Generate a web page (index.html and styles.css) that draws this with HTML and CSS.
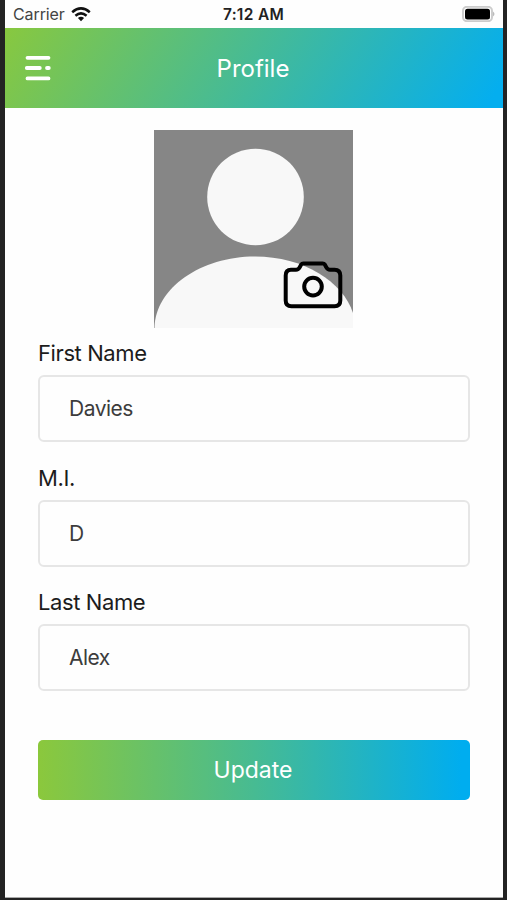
FILE: index.html
```html
<!DOCTYPE html>
<html lang="en">
<head>
<meta charset="utf-8">
<title>Profile</title>
<link rel="stylesheet" href="styles.css">
</head>
<body>
<div class="screen">
  <div class="status">
    <div class="carrier"><span>Carrier</span>
      <svg class="wifi" width="20" height="15" viewBox="0 0 20 15" fill="none" stroke="#111" stroke-width="2.5"><path d="M1.2 5.2Q10-2.4 18.8 5.2M4.4 8.7Q10 4.1 15.6 8.7"/><path d="M6.9 11Q10 8.7 13.1 11L10 14.2Z" fill="#111" stroke="none"/></svg>
    </div>
    <span class="time">7:12 AM</span>
    <svg class="battery" width="34" height="16" viewBox="0 0 34 16"><rect x="1" y=".8" width="29" height="14.4" rx="4" fill="#fff" stroke="#ccc" stroke-width="2"/><rect x="3" y="2.7" width="25" height="10.8" rx="2.5" fill="#000"/><path d="M31 5.5Q34 8 31 10.5Z" fill="#bbb"/></svg>
  </div>
  <header class="header">
    <svg class="menu" width="28" height="27" viewBox="0 0 28 27" stroke="#fff" stroke-width="3.8" stroke-linecap="round"><path d="M3.5 2.8H24.5M2.8 13H15.8M23 13H24.8M3.5 23.4H24.5"/></svg>
    <h1 class="title">Profile</h1>
  </header>
  <main class="content">
    <div class="avatar">
      <svg width="199" height="198" viewBox="0 0 199 198"><path d="M0 0H199V198H0Z" fill="#868686"/><circle cx="101.5" cy="67" r="48.3" fill="#f8f8f8"/><path d="M.5 198C1 158 47 126.5 101 126.5C150 126.5 189 152 199 183V198Z" fill="#f8f8f8"/></svg>
      <svg class="camera" width="60" height="48" viewBox="0 0 60 48" fill="none" stroke="#000" stroke-width="4" stroke-linejoin="round"><path d="M8 8.7H13Q15.4 8.7 16.6 6.4L18.2 3.6Q18.9 2.4 20.4 2.4H39.6Q41.1 2.4 41.8 3.6L43.4 6.4Q44.6 8.7 47 8.7H51.5Q57.3 8.7 57.3 14.5V39.5Q57.3 45.3 51.5 45.3H8.5Q2.7 45.3 2.7 39.5V14.5Q2.7 8.7 8 8.7Z"/><circle cx="30" cy="25.6" r="8.8"/></svg>
    </div>
    <div class="field"><div class="label">First Name</div><div class="input">Davies</div></div>
    <div class="field"><div class="label">M.I.</div><div class="input">D</div></div>
    <div class="field"><div class="label">Last Name</div><div class="input">Alex</div></div>
    <button class="update">Update</button>
  </main>
</div>
</body>
</html>
```
FILE: styles.css
```css
* { box-sizing: border-box; }
body { margin: 0; background: #232323; font-family: Inter, "Liberation Sans", sans-serif; }
.screen { height: 900px; background: #fefefe; border: solid #232323; border-width: 0 4px 2px 5px; box-shadow: inset 0 -1px #aaa; }
.status { height: 28px; display: grid; grid-template-columns: 1fr auto 1fr; align-items: center; padding: 0 7px 0 8px; color: #111; font-size: 16px; line-height: 28px; }
.carrier { display: flex; align-items: center; gap: 6px; color: #444; letter-spacing: -.1px; }
.time { position: relative; left: -1px; top: 1px; font-weight: 600; font-size: 15.5px; letter-spacing: .3px; color: #222; }
.battery { justify-self: end; }
.header { height: 80px; display: grid; grid-template-columns: 1fr auto 1fr; align-items: center; padding: 0 21px 0 19px; background: linear-gradient(122deg, #88c83f 0%, #47bb94 48%, #04aeef 97%); }
.title { margin: 2px 0 0; color: #fff; font-weight: 400; font-size: 24px; line-height: 30px; }
.content { display: flex; flex-direction: column; padding: 22px 33px 0; }
.avatar { position: relative; width: 199px; height: 198px; margin-left: 116px; }
.avatar svg { display: block; }
.avatar .camera { position: absolute; left: 129px; top: 131px; }
.field { height: 124.5px; padding-top: 10px; }
.label { height: 37px; line-height: 30px; font-size: 22px; letter-spacing: -.4px; color: #1c1c1c; }
.input { height: 67px; line-height: 63px; border: 2px solid #e6e6e6; border-radius: 6px; padding-left: 29px; font-size: 21px; letter-spacing: -.5px; color: #3c3c3c; }
.update { height: 60px; margin-top: 38.5px; padding: 0 2px 0 0; border: 0; border-radius: 5px; color: #fff; font: 400 23px/60px Inter, "Liberation Sans", sans-serif; background: linear-gradient(90deg, #8bc83c, #47bb92 50%, #00adef 98%); }
```
